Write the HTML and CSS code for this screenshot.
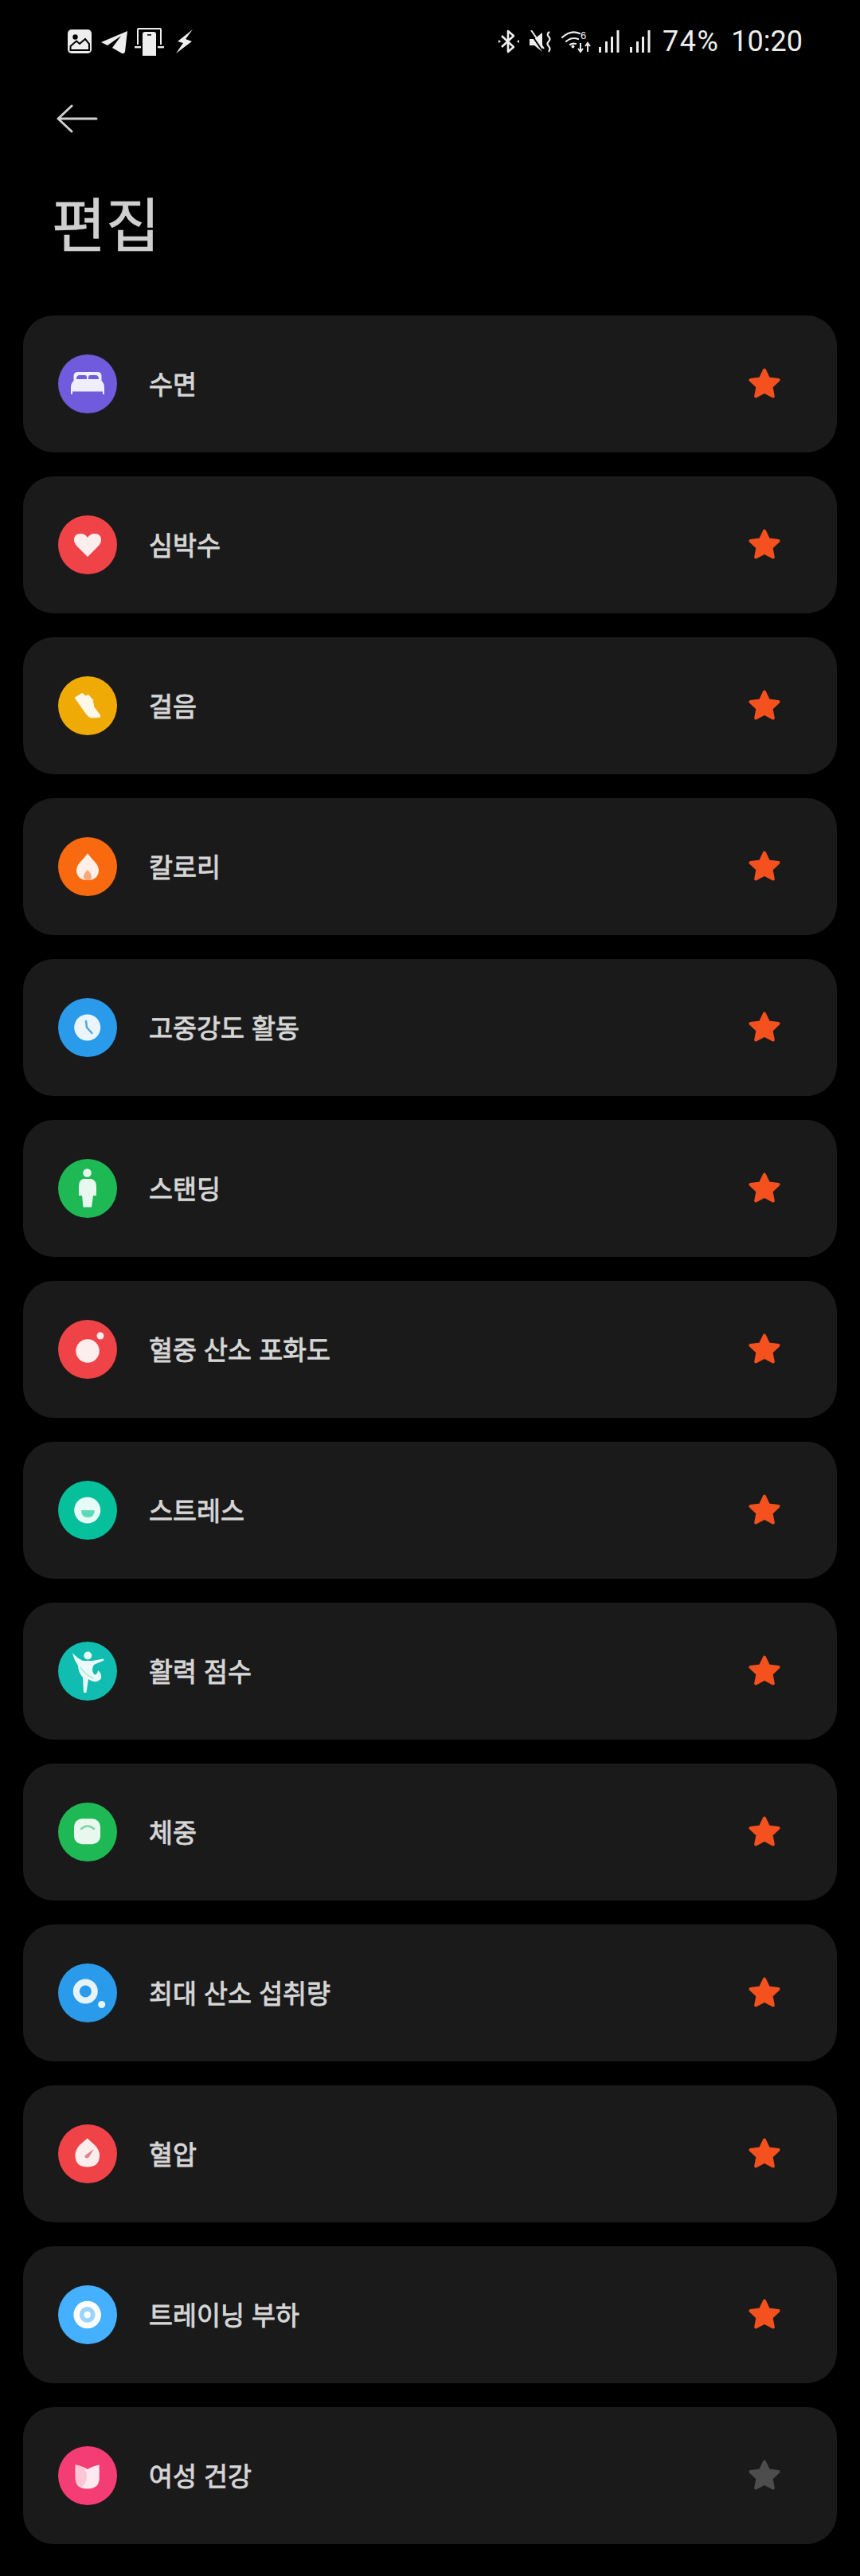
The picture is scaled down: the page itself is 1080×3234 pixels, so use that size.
FILE: index.html
```html
<!DOCTYPE html>
<html lang="ko">
<head>
  <meta charset="UTF-8">
  <meta name="viewport" content="width=device-width, initial-scale=1.0">
  <title>편집</title>
  <link rel="stylesheet" href="styles.css">
</head>
<body>
<svg class="defs" width="0" height="0">
  <symbol id="star" viewBox="0 0 40 40">
    <path d="M20 2.500 L25.200 13.500 L37.500 15 L28.500 23.500 L30.800 35.500 L20 29.800 L9.200 35.500 L11.500 23.500 L2.500 15 L14.800 13.500 Z" fill="currentColor" stroke="currentColor" stroke-width="4" stroke-linejoin="round"/>
  </symbol>
</svg>

<div class="statusbar">
  <div class="status-left">
    <!-- gallery -->
    <svg width="30" height="30" viewBox="0 0 30 30"><rect x="0" y="0" width="30" height="30" rx="5" fill="#eee"/><circle cx="9.500" cy="9.500" r="3.200" fill="#000"/><path d="M3.500 26 V21 L11 14.500 L15 18 L22 12 L27 18 V26 Z" fill="none" stroke="#000" stroke-width="2"/></svg>
    <!-- telegram -->
    <svg class="ic-tg" width="34" height="31" viewBox="0 0 34 31"><path d="M0 16 L33 2 L30 28 Q29 31 26 30 L14 23 L25 8 L8 20 Z" fill="#eee"/></svg>
    <!-- phone on stand -->
    <svg class="ic-phone" width="37" height="35" viewBox="0 0 37 35"><path d="M4 21 V2 Q4 1 5 1 H32 Q33 1 33 2 V21" fill="none" stroke="#eee" stroke-width="2"/><rect x="0" y="23" width="8" height="2.400" fill="#eee"/><rect x="29" y="23" width="8" height="2.400" fill="#eee"/><path d="M10 8 Q10 5 13 5 H24 Q27 5 27 8 V35 H10 Z" fill="#eee"/><rect x="16" y="8" width="5" height="1.600" fill="#000"/></svg>
    <!-- bolt -->
    <svg class="ic-bolt" width="22" height="30" viewBox="0 0 22 30"><path d="M21 0 L2 15 L9 17 L0 30 L20 15 L12 12 Z" fill="#eee"/></svg>
  </div>
  <div class="status-right">
    <!-- bluetooth -->
    <svg width="26" height="30" viewBox="0 0 26 30"><path d="M4 8 L19 22 L12 28 V2 L19 8 L4 22" fill="none" stroke="#eee" stroke-width="2.600" stroke-linejoin="round"/><path d="M0 13 L3 15 L0 17 Z M26 13 L23 15 L26 17 Z" fill="#eee"/></svg>
    <!-- mute vibrate -->
    <svg class="ic-mute" width="28" height="29" viewBox="0 0 28 29"><path d="M0 11 H6 L16 3 V27 L6 19 H0 Z" fill="#eee"/><path d="M0 2 L17 27" stroke="#000" stroke-width="2"/><path d="M2 0 L18 23" stroke="#eee" stroke-width="2"/><path d="M25 2 Q21 5 24 8 Q27 11 24 14 Q21 17 24 20 Q27 23 24 27" fill="none" stroke="#eee" stroke-width="2.200"/></svg>
    <!-- wifi 6 -->
    <svg class="ic-wifi" width="38" height="29" viewBox="0 0 38 29"><path d="M1 9 Q12 -1 23 4 M6 14 Q13 8 21 11 M11 18 Q14 16 18 17" fill="none" stroke="#eee" stroke-width="2.200" stroke-linecap="round"/><circle cx="14.500" cy="20.500" r="2" fill="#eee"/><text class="wifi-six" x="24" y="11">6</text><path d="M24 16 V27 M21 23 L24 27 L27 23 M33 27 V17 M30 20 L33 16 L36 20" fill="none" stroke="#eee" stroke-width="2"/></svg>
    <!-- signal x2 -->
    <svg class="ic-sig" width="26" height="28" viewBox="0 0 26 28"><rect x="0" y="21" width="3" height="7" fill="#eee"/><rect x="8" y="14" width="3" height="14" fill="#eee"/><rect x="15" y="8" width="3" height="20" fill="#eee"/><rect x="22.500" y="0" width="3" height="28" fill="#eee"/></svg>
    <svg class="ic-sig2" width="26" height="28" viewBox="0 0 26 28"><rect x="0" y="21" width="3" height="7" fill="#eee"/><rect x="8" y="14" width="3" height="14" fill="#eee"/><rect x="15" y="8" width="3" height="20" fill="#eee"/><rect x="22.500" y="0" width="3" height="28" fill="#eee"/></svg>
    <span class="battery">74%</span>
    <span class="clock">10:20</span>
  </div>
</div>

<div class="toolbar">
  <svg width="52" height="36" viewBox="0 0 52 36"><path d="M19 2 L2 18 L19 34 M2 18 H50" fill="none" stroke="#cfcfcf" stroke-width="3" stroke-linecap="round" stroke-linejoin="round"/></svg>
</div>

<h1 class="title">편집</h1>

<div class="list">
  <div class="row">
    <div class="badge c-sleep">
      <svg width="74" height="74" viewBox="0 0 74 74"><path d="M19.500 34 V27 Q19.500 22 25 22 H49 Q54.500 22 54.500 27 V34 Z" fill="#f1eefc"/><path d="M23 31 Q23 26 27 26 H33.500 Q36 26 36 29 V31 Z M38 31 V29 Q38 26 40.500 26 H47 Q51 26 51 31 Z" fill="#6f5bdc"/><path d="M16 42 Q16 32 24 32 H50 Q58 32 58 42 V50 H56 V46.500 H18 V50 H16 Z" fill="#f1eefc"/></svg>
    </div>
    <span class="label">수면</span>
    <svg class="star"><use href="#star"/></svg>
  </div>
  <div class="row">
    <div class="badge c-heart">
      <svg width="74" height="74" viewBox="0 0 74 74"><path d="M37 52 L24 39 Q20 35 20 31 Q20 23 28 23 Q34 23 37 28 Q40 23 46 23 Q54 23 54 31 Q54 35 50 39 Z" fill="#fdeeee"/></svg>
    </div>
    <span class="label">심박수</span>
    <svg class="star"><use href="#star"/></svg>
  </div>
  <div class="row">
    <div class="badge c-walk">
      <svg width="74" height="74" viewBox="0 0 74 74"><path d="M21 27 L30 21.500 L35 25 L38 23.500 L43 29 L45 39 L52 48 L53 51 L42 52 Q39 51.500 36 48 Z" fill="#fff8e8" stroke="#fff8e8" stroke-width="1" stroke-linejoin="round"/></svg>
    </div>
    <span class="label">걸음</span>
    <svg class="star"><use href="#star"/></svg>
  </div>
  <div class="row">
    <div class="badge c-fire">
      <svg width="74" height="74" viewBox="0 0 74 74"><path d="M37 20.500 Q42 27 47 32 Q51 37 51 42 Q50 54 37 54 Q24 54 23 42 Q23 37 27 32 Q32 27 37 20.500 Z" fill="#fef0e8"/><path d="M37 41 Q42 46 42 50 Q42 54 37 54 Q32 54 32 50 Q32 46 37 41 Z" fill="#f9a77a"/></svg>
    </div>
    <span class="label">칼로리</span>
    <svg class="star"><use href="#star"/></svg>
  </div>
  <div class="row">
    <div class="badge c-clock">
      <svg width="74" height="74" viewBox="0 0 74 74"><circle cx="36.700" cy="37" r="16.500" fill="#eaf5fe"/><path d="M35 29 L36 37 L42.500 44" fill="none" stroke="#4da5e8" stroke-width="2.400" stroke-linecap="round"/></svg>
    </div>
    <span class="label">고중강도 활동</span>
    <svg class="star"><use href="#star"/></svg>
  </div>
  <div class="row">
    <div class="badge c-green">
      <svg width="74" height="74" viewBox="0 0 74 74"><circle cx="36.500" cy="17.500" r="5.300" fill="#e8f8ee"/><path d="M31 25 H42 Q48 27 48 35 V46 H44 L42 60.500 H31.500 L30 46 H26 V35 Q26 27 31 25 Z" fill="#e8f8ee"/></svg>
    </div>
    <span class="label">스탠딩</span>
    <svg class="star"><use href="#star"/></svg>
  </div>
  <div class="row">
    <div class="badge c-red">
      <svg width="74" height="74" viewBox="0 0 74 74"><circle cx="37" cy="39" r="14.700" fill="#fdeeee"/><circle cx="53" cy="20" r="4.500" fill="#fdeeee"/></svg>
    </div>
    <span class="label">혈중 산소 포화도</span>
    <svg class="star"><use href="#star"/></svg>
  </div>
  <div class="row">
    <div class="badge c-stress">
      <svg width="74" height="74" viewBox="0 0 74 74"><circle cx="36.700" cy="37" r="16.500" fill="#e6fbf6"/><path d="M29 37 H45.700 Q45.700 46 37.300 46 Q29 46 29 37 Z" fill="#5dd8bb"/></svg>
    </div>
    <span class="label">스트레스</span>
    <svg class="star"><use href="#star"/></svg>
  </div>
  <div class="row">
    <div class="badge c-vital">
      <svg width="74" height="74" viewBox="0 0 74 74"><circle cx="37.300" cy="17.500" r="5" fill="#eafaf8"/><path d="M18 14 Q24 21 31 24 H43 L57 21.500 L57.500 23.500 L45 29 Q41 35 45 41 Q49 43 50 36 Q55 40 54 46 Q51 51 44 50 Q41 49 38 47 L35.500 64 H32 L31 45 Q25 38 25 30 Q20 23 18 14 Z" fill="#eafaf8"/><path d="M28 32 Q33 41 44 46" fill="none" stroke="#a5e3da" stroke-width="1.500"/></svg>
    </div>
    <span class="label">활력 점수</span>
    <svg class="star"><use href="#star"/></svg>
  </div>
  <div class="row">
    <div class="badge c-green">
      <svg width="74" height="74" viewBox="0 0 74 74"><rect x="20" y="20.300" width="33" height="32" rx="10" fill="#e8f8ee"/><path d="M29 33 Q37 26 45 33" fill="none" stroke="#7fd6a0" stroke-width="2.500" stroke-linecap="round"/></svg>
    </div>
    <span class="label">체중</span>
    <svg class="star"><use href="#star"/></svg>
  </div>
  <div class="row">
    <div class="badge c-clock">
      <svg width="74" height="74" viewBox="0 0 74 74"><circle cx="34.300" cy="35" r="11.500" fill="none" stroke="#e6f3fd" stroke-width="8"/><circle cx="54.700" cy="51.500" r="4.500" fill="#e6f3fd"/></svg>
    </div>
    <span class="label">최대 산소 섭취량</span>
    <svg class="star"><use href="#star"/></svg>
  </div>
  <div class="row">
    <div class="badge c-red">
      <svg width="74" height="74" viewBox="0 0 74 74"><path d="M36.700 17.500 L46 26 Q52 32 52 39 Q52 53.500 36.700 53.500 Q21.500 53.500 21.500 39 Q21.500 32 27 26 Z" fill="#fdeeee"/><path d="M45 31 L38.500 41.500 Q35 43.500 33.500 41 Q33 39 35 38 Z" fill="#e8808a"/></svg>
    </div>
    <span class="label">혈압</span>
    <svg class="star"><use href="#star"/></svg>
  </div>
  <div class="row">
    <div class="badge c-load">
      <svg width="74" height="74" viewBox="0 0 74 74"><circle cx="36.700" cy="37" r="17.300" fill="#fff"/><circle cx="36.700" cy="37" r="10" fill="#9bd5ff"/><circle cx="36.700" cy="37" r="4.200" fill="#fff"/></svg>
    </div>
    <span class="label">트레이닝 부하</span>
    <svg class="star"><use href="#star"/></svg>
  </div>
  <div class="row">
    <div class="badge c-women">
      <svg width="74" height="74" viewBox="0 0 74 74"><path d="M21.700 23.500 Q31 25 37 29 Q43 25 51.700 23.500 V40 Q51.700 53.500 36.700 53.500 Q21.700 53.500 21.700 40 Z" fill="#fdeaf0"/><path d="M21.700 23.500 Q36 25 36 38 Q36 46 29 52 Q21.700 48 21.700 40 Z" fill="#fbc6d6"/></svg>
    </div>
    <span class="label">여성 건강</span>
    <svg class="star off"><use href="#star"/></svg>
  </div>
</div>
</body>
</html>
```

FILE: styles.css
```css
body {
  margin: 0;
  padding: 0;
  background-color: #000;
  font-family: "Noto Sans CJK KR", "Noto Sans", sans-serif;
  color: #e0e0e0;
}
.defs {
  position: absolute;
}
.statusbar {
  display: flex;
  justify-content: space-between;
  align-items: center;
  height: 34px;
  padding: 35px 72px 1px 85px;
}
.status-left,
.status-right {
  display: flex;
  align-items: center;
}
.ic-tg {
  margin-left: 12px;
}
.ic-phone {
  margin-left: 8px;
}
.ic-bolt {
  margin-left: 15px;
}
.ic-mute {
  margin-left: 13px;
}
.ic-wifi {
  margin-left: 12px;
}
.ic-sig {
  margin-left: 9px;
}
.ic-sig2 {
  margin-left: 13px;
}
.wifi-six {
  font-family: "Liberation Sans", sans-serif;
  font-size: 13px;
  fill: #eee;
}
.battery,
.clock {
  font-family: Roboto, sans-serif;
  font-size: 36px;
  line-height: 34px;
  color: #eee;
}
.battery {
  margin-left: 15px;
  letter-spacing: 1.5px;
}
.clock {
  margin-left: 15px;
}
.toolbar {
  display: flex;
  padding: 61px 0 0 71px;
  height: 36px;
}
.title {
  margin: 0;
  padding: 61px 0 0 65px;
  height: 168px;
  box-sizing: content-box;
  font-size: 74px;
  font-weight: 400;
  line-height: 100px;
  -webkit-text-stroke: 0.6px #cfcfcf;
  color: #cfcfcf;
}
.list {
  display: flex;
  flex-direction: column;
  gap: 30px;
  padding: 0 29px 40px;
}
.row {
  display: flex;
  align-items: center;
  height: 172px;
  padding: 0 71px 0 44px;
  background-color: #1a1a1a;
  border-radius: 38px;
}
.badge {
  display: flex;
  align-items: center;
  justify-content: center;
  flex: none;
  width: 74px;
  height: 74px;
  border-radius: 50%;
}
.label {
  flex: 1;
  margin-left: 40px;
  padding-bottom: 4px;
  font-size: 32.6px;
  font-weight: 400;
  -webkit-text-stroke: 0.9px #d6d6d6;
  color: #d6d6d6;
}
.star {
  flex: none;
  width: 40px;
  height: 40px;
  color: #f4511e;
}
.star.off {
  color: #4d4d4d;
}
.c-sleep { background-color: #6f5bdc; }
.c-heart { background-color: #f04348; }
.c-walk { background-color: #f0aa05; }
.c-fire { background-color: #f96a10; }
.c-clock { background-color: #2a9bea; }
.c-green { background-color: #1eb955; }
.c-red { background-color: #f04348; }
.c-stress { background-color: #06bf9b; }
.c-vital { background-color: #10bdb0; }
.c-load { background-color: #44b0ff; }
.c-women { background-color: #f43d74; }
```
